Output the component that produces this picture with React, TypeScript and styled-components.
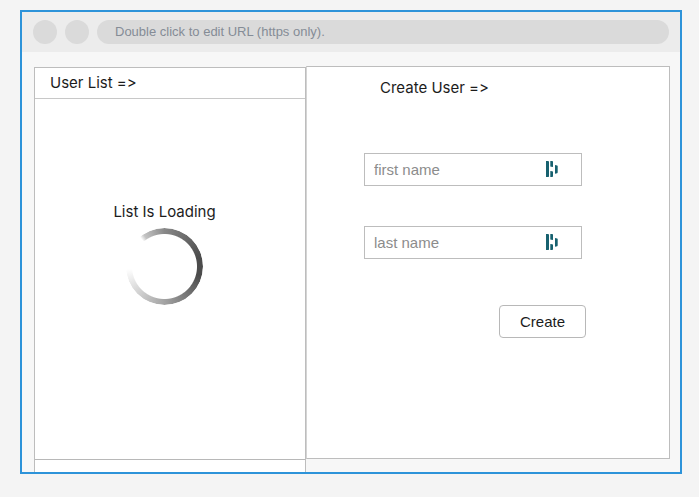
import React from "react";
import styled, { createGlobalStyle } from "styled-components";

const GlobalStyle = createGlobalStyle`
  * { box-sizing: border-box; }
  body {
    margin: 0;
    background: #f4f4f4;
    color: #1c1c1c;
    font-family: Inter, "Liberation Sans", sans-serif;
    font-size: 15px;
    font-feature-settings: "calt" 0;
  }
`;

const Page = styled.main`
  display: flex;
  height: 100vh;
  padding: 10px 17px 23px 20px;
`;

const BrowserFrame = styled.section`
  display: flex;
  flex: 1;
  flex-direction: column;
  min-width: 0;
  overflow: hidden;
  border: 2px solid #2d93d9;
  background: #f7f7f7;
`;

const Toolbar = styled.header`
  display: flex;
  flex: none;
  align-items: center;
  gap: 8px;
  padding: 8px 11px;
  background: #ececec;
`;

const RoundButton = styled.button`
  width: 24px;
  height: 24px;
  padding: 0;
  border: 0;
  border-radius: 50%;
  background: #dadada;
`;

const AddressBar = styled.input`
  flex: 1;
  min-width: 0;
  height: 24px;
  padding: 0 18px 2px;
  border: 0;
  border-radius: 12px;
  background: #dadada;
  font: 13px "Liberation Sans", sans-serif;
  &::placeholder { color: #858c96; opacity: 1; }
`;

const Content = styled.div`
  display: grid;
  flex: 1;
  grid-template-columns: 272fr 364fr;
  min-height: 0;
  padding: 14px 10px 0 12px;
`;

const ListPanel = styled.section`
  display: flex;
  flex-direction: column;
  margin-top: 1px;
  border: 1px solid #bdbdbd;
  border-bottom: 0;
  background: #fff;
`;

const ListHeader = styled.h2`
  margin: 0;
  padding: 0 15px;
  border-bottom: 1px solid #c8c8c8;
  font-size: 15px;
  font-weight: 400;
  line-height: 30px;
`;

const ListBody = styled.div`
  display: flex;
  flex: 1;
  flex-direction: column;
  align-items: center;
  padding: 103px 11px 0 0;
  border-bottom: 1px solid #b8b8b8;
`;

const ListFooter = styled.div`
  height: 12px;
`;

const LoadingText = styled.p`
  margin: 0 0 6px;
  line-height: 20px;
`;

const Spinner = styled.div`
  width: 77px;
  height: 77px;
  border-radius: 50%;
  background: conic-gradient(
    #888 0deg, #4c4c4c 75deg, #4c4c4c 105deg, #a3a3a3 180deg,
    #d2d2d2 225deg, #fff 266deg, #fff 320deg, #c4c4c4 327deg, #888 360deg
  );
  mask: radial-gradient(closest-side, transparent 32px, #000 33px);
`;

const CreatePanel = styled.section`
  margin-bottom: 13px;
  padding: 12px 12px 0 57px;
  border: 1px solid #bdbdbd;
  border-left-color: #d4d4d4;
  background: #fff;
`;

const FormTitle = styled.h2`
  margin: 0 0 56px;
  padding-left: 16px;
  font-size: 15px;
  font-weight: 400;
  line-height: 18px;
`;

const Form = styled.form`
  display: flex;
  flex-direction: column;
  align-items: flex-start;
  gap: 40px;
  max-width: 222px;
`;

const Field = styled.label`
  display: flex;
  align-items: center;
  width: 218px;
  max-width: 100%;
  height: 33px;
  padding: 0 23px 0 9px;
  border: 1px solid #bdbdbd;
`;

const TextInput = styled.input`
  flex: 1;
  min-width: 0;
  height: 31px;
  padding: 0;
  border: 0;
  outline: 0;
  background: transparent;
  font: 15px "Liberation Sans", sans-serif;
  &::placeholder { color: #8c8c8c; opacity: 1; }
`;

const CreateButton = styled.button`
  align-self: flex-end;
  height: 33px;
  margin-top: 6px;
  padding: 0 20px;
  border: 1px solid #b8b8b8;
  border-radius: 4px;
  background: #fff;
  color: #1c1c1c;
  font: 15px "Liberation Sans", sans-serif;
`;

const Icon = styled.svg`
  display: block;
  flex: none;
  margin-bottom: 2px;
`;

function PasswordManagerIcon() {
  return (
    <Icon width="12" height="16" viewBox="0 0 12 16" fill="#17616f" aria-hidden="true">
      <path d="M0 0h2.5l.5.4v15.2l-.5.4H0z" />
      <path d="M4.3 0h1.9l.8.6v5.2l-.5.3-2.2-.7z" />
      <path d="M4.3 10l2.2.3.5.4v4.7l-.8.6H4.3z" />
      <path d="M9 4l2.2.4.5.5v6.6l-.5.7-2.2.5z" />
    </Icon>
  );
}

function NameField({ label }: { label: string }) {
  return (
    <Field>
      <TextInput type="text" placeholder={label} aria-label={label} />
      <PasswordManagerIcon />
    </Field>
  );
}

export default function App() {
  return (
    <>
      <GlobalStyle />
      <Page>
        <BrowserFrame>
          <Toolbar>
            <RoundButton type="button" aria-label="Back" />
            <RoundButton type="button" aria-label="Forward" />
            <AddressBar
              type="url"
              aria-label="URL"
              placeholder="Double click to edit URL (https only)."
            />
          </Toolbar>
          <Content>
            <ListPanel>
              <ListHeader>User List =&gt;</ListHeader>
              <ListBody>
                <LoadingText>List Is Loading</LoadingText>
                <Spinner role="status" aria-label="Loading" />
              </ListBody>
              <ListFooter />
            </ListPanel>
            <CreatePanel>
              <FormTitle>Create User =&gt;</FormTitle>
              <Form onSubmit={(event) => event.preventDefault()}>
                <NameField label="first name" />
                <NameField label="last name" />
                <CreateButton type="submit">Create</CreateButton>
              </Form>
            </CreatePanel>
          </Content>
        </BrowserFrame>
      </Page>
    </>
  );
}
